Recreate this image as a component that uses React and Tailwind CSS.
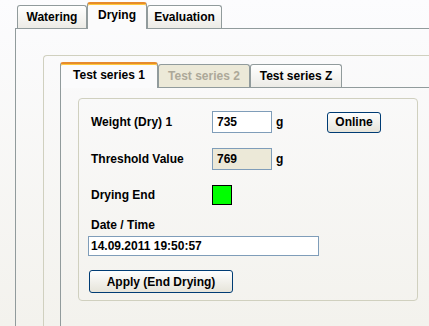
import React from "react";

// XP-style tab page: outer tabs, nested group, inner tabs, form group
const font = "font-['Liberation_Sans',Arial,sans-serif]";

function Tab({ label, selected, disabled, w, h }) {
  if (selected) {
    return (
      <div
        className={`${w} ${h} -mb-px relative z-10 flex items-center justify-center pb-[3px] border-x border-[#919b9c] border-t-2 border-t-[#e68b2c] rounded-t-[3px] bg-[#fbfbfc] shadow-[inset_0_1px_0_#ffc83c]`}
      >
        {label}
      </div>
    );
  }
  return (
    <div
      className={`${w} h-[23px] flex items-center justify-center border-x border-t border-[#919b9c] rounded-t-[3px] ${
        disabled ? "bg-[#ece9d8] text-[#aca899]" : "bg-gradient-to-b from-white to-[#ecebe6]"
      }`}
    >
      {label}
    </div>
  );
}

function Field({ value, bg }) {
  return (
    <div className={`w-[60px] h-[22px] border border-[#7f9db9] ${bg} pl-[4px] flex items-center`}>
      {value}
    </div>
  );
}

function XpButton({ children, className }) {
  return (
    <div
      className={`flex items-center justify-center border border-[#003c74] rounded-[3px] bg-gradient-to-b from-[#fefefe] to-[#e6e4da] ${className}`}
    >
      {children}
    </div>
  );
}

export default function App() {
  return (
    <div
      className={`w-[429px] h-[326px] overflow-hidden flex flex-col pl-[15px] bg-gradient-to-b from-[#fcfcfe] to-[#f3f2ed] ${font} font-bold text-[12px] leading-[14px] text-black`}
    >
      {/* outer tabs */}
      <div className="h-[28px] flex items-end pl-[2px]">
        <Tab label="Watering" w="w-[70px]" />
        <Tab label="Drying" selected w="w-[60px]" h="h-[27px]" />
        <Tab label="Evaluation" w="w-[75px]" />
      </div>

      {/* outer panel */}
      <div className="flex-1 flex flex-col border-l border-t border-[#919b9c] pl-[27px] pt-[26px]">
        <div className="flex-1 flex flex-col border-l border-t border-[#d0d0bf] rounded-tl-[4px] pl-[16px] pt-[6px]">
          {/* inner tabs */}
          <div className="h-[25px] flex items-end">
            <Tab label="Test series 1" selected w="w-[98px]" h="h-[26px]" />
            <Tab label="Test series 2" disabled w="w-[92px]" />
            <Tab label="Test series Z" w="w-[92px]" />
          </div>

          {/* inner panel */}
          <div className="flex-1 border-l border-t border-[#919b9c] pl-[17px] pt-[10px]">
            <div className="w-[340px] h-[203px] border border-[#d0d0bf] rounded-[4px] pl-[12px] pt-[12px] flex flex-col">
              <div className="flex items-center h-[22px]">
                <div className="w-[121px]">Weight (Dry) 1</div>
                <Field value="735" bg="bg-white" />
                <div className="w-[55px] pl-[4px]">g</div>
                <XpButton className="w-[54px] h-[21px]">Online</XpButton>
              </div>

              <div className="flex items-center h-[22px] mt-[15px]">
                <div className="w-[121px]">Threshold Value</div>
                <Field value="769" bg="bg-[#ece9d8]" />
                <div className="pl-[4px]">g</div>
              </div>

              <div className="flex items-center h-[20px] mt-[15px]">
                <div className="w-[121px]">Drying End</div>
                <div className="w-[20px] h-[20px] border border-black bg-[#00ff00]" />
              </div>

              <div className="mt-[13px] h-[14px]">Date / Time</div>
              <div className="mt-[4px] -ml-[3px] w-[231px] h-[20px] border border-[#7f9db9] bg-white pl-[2px] flex items-center">
                14.09.2011 19:50:57
              </div>

              <XpButton className="mt-[14px] -ml-[2px] w-[144px] h-[23px]">Apply (End Drying)</XpButton>
            </div>
          </div>
        </div>
      </div>
    </div>
  );
}
